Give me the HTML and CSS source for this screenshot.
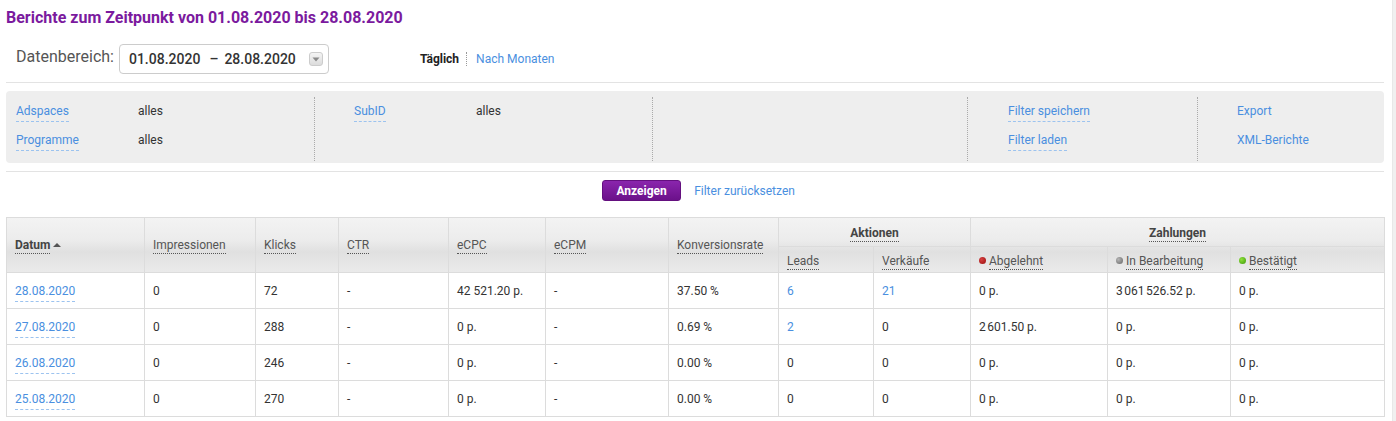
FILE: index.html
```html
<!DOCTYPE html>
<html lang="de">
<head>
<meta charset="utf-8">
<title>Berichte</title>
<link rel="stylesheet" href="styles.css">
</head>
<body>
<div class="page">
  <main class="main">
    <h1 class="title">Berichte zum Zeitpunkt von 01.08.2020 bis 28.08.2020</h1>

    <div class="range-row">
      <span class="range-label">Datenbereich:</span>
      <div class="range-box">
        <span class="range-date">01.08.2020</span>
        <span class="range-dash">–</span>
        <span class="range-date">28.08.2020</span>
        <span class="range-btn"><svg width="8" height="5" viewBox="0 0 8 5"><path d="M0.5 0.5 L7.5 0.5 L4 4.5 Z" fill="#8a8a8a"/></svg></span>
      </div>
      <div class="period">
        <span class="period-active">Täglich</span>
        <span class="period-sep"></span>
        <a class="period-link">Nach Monaten</a>
      </div>
    </div>

    <div class="hr"></div>

    <div class="filters">
      <div class="fcol fcol-first">
        <div class="frow"><span class="fkey"><a class="dlink">Adspaces</a></span><span class="fval">alles</span></div>
        <div class="frow"><span class="fkey"><a class="dlink">Programme</a></span><span class="fval">alles</span></div>
      </div>
      <div class="fcol">
        <div class="frow"><span class="fkey"><a class="dlink">SubID</a></span><span class="fval">alles</span></div>
      </div>
      <div class="fcol"></div>
      <div class="fcol fcol-save">
        <div class="frow"><a class="dlink">Filter speichern</a></div>
        <div class="frow"><a class="dlink">Filter laden</a></div>
      </div>
      <div class="fcol">
        <div class="frow"><a class="plink">Export</a></div>
        <div class="frow"><a class="plink">XML-Berichte</a></div>
      </div>
    </div>

    <div class="hr hr2"></div>

    <div class="actions">
      <button class="btn">Anzeigen</button>
      <a class="plink">Filter zurücksetzen</a>
    </div>

    <table class="report">
      <colgroup>
        <col class="c1"><col class="c2"><col class="c3"><col class="c4">
        <col class="c5"><col class="c6"><col class="c7"><col class="c8">
        <col class="c9"><col class="c10"><col class="c11"><col class="c12">
      </colgroup>
      <thead>
        <tr class="hrow1">
          <th rowspan="2"><span class="hl bold">Datum</span><span class="sort"></span></th>
          <th rowspan="2"><span class="hl">Impressionen</span></th>
          <th rowspan="2"><span class="hl">Klicks</span></th>
          <th rowspan="2"><span class="hl">CTR</span></th>
          <th rowspan="2"><span class="hl">eCPC</span></th>
          <th rowspan="2"><span class="hl">eCPM</span></th>
          <th rowspan="2"><span class="hl">Konversionsrate</span></th>
          <th colspan="2" class="group"><span class="hl bold">Aktionen</span></th>
          <th colspan="3" class="group"><span class="hl bold">Zahlungen</span></th>
        </tr>
        <tr class="hrow2">
          <th><span class="hl">Leads</span></th>
          <th><span class="hl">Verkäufe</span></th>
          <th><span class="dot dot-red"></span><span class="hl">Abgelehnt</span></th>
          <th><span class="dot dot-gray"></span><span class="hl">In Bearbeitung</span></th>
          <th><span class="dot dot-green"></span><span class="hl">Bestätigt</span></th>
        </tr>
      </thead>
      <tbody>
        <tr>
          <td><a class="dlink">28.08.2020</a></td><td>0</td><td>72</td><td>-</td><td>42&nbsp;521.20 p.</td><td>-</td><td>37.50 %</td>
          <td><a class="plink">6</a></td><td><a class="plink">21</a></td><td>0 p.</td><td>3&#8239;061&#8239;526.52 p.</td><td>0 p.</td>
        </tr>
        <tr>
          <td><a class="dlink">27.08.2020</a></td><td>0</td><td>288</td><td>-</td><td>0 p.</td><td>-</td><td>0.69 %</td>
          <td><a class="plink">2</a></td><td>0</td><td>2&#8239;601.50 p.</td><td>0 p.</td><td>0 p.</td>
        </tr>
        <tr>
          <td><a class="dlink">26.08.2020</a></td><td>0</td><td>246</td><td>-</td><td>0 p.</td><td>-</td><td>0.00 %</td>
          <td>0</td><td>0</td><td>0 p.</td><td>0 p.</td><td>0 p.</td>
        </tr>
        <tr>
          <td><a class="dlink">25.08.2020</a></td><td>0</td><td>270</td><td>-</td><td>0 p.</td><td>-</td><td>0.00 %</td>
          <td>0</td><td>0</td><td>0 p.</td><td>0 p.</td><td>0 p.</td>
        </tr>
      </tbody>
    </table>
  </main>
  <div class="scrolltrack"></div>
</div>
</body>
</html>
```

FILE: styles.css
```css
html, body {
  margin: 0;
  padding: 0;
  background: #fff;
  overflow: hidden;
}
body {
  font-family: Roboto, "Liberation Sans", Arial, sans-serif;
  font-size: 12px;
  color: #333;
}
.page {
  display: flex;
  height: 421px;
}
.main {
  width: 1378px;
  margin-left: 6px;
  flex: none;
}
.scrolltrack {
  margin-left: auto;
  width: 3px;
  background: #f0f0f0;
  border-left: 1px solid #e8e8e8;
}
a { cursor: pointer; }

.title {
  margin: 0;
  padding-top: 8px;
  font-size: 16px;
  line-height: 20px;
  font-weight: 700;
  color: #7b1a9e;
}

.range-row {
  display: flex;
  align-items: center;
  margin-top: 16px;
  height: 30px;
}
.range-label {
  margin-left: 10px;
  font-size: 16px;
  color: #555;
  margin-right: 5px;
  position: relative;
  top: -3px;
}
.range-box {
  display: flex;
  align-items: center;
  box-sizing: border-box;
  width: 210px;
  height: 30px;
  border: 1px solid #ccc;
  border-radius: 4px;
  padding-left: 9px;
  font-size: 14px;
  font-weight: 500;
  color: #333;
  background: #fff;
}
.range-dash {
  margin: 0 6px 0 9px;
}
.range-btn {
  display: flex;
  align-items: center;
  justify-content: center;
  width: 14px;
  height: 14px;
  margin-left: 13px;
  border: 1px solid #ccc;
  border-radius: 3px;
  background: linear-gradient(#f4f4f4, #dcdcdc);
  box-sizing: border-box;
}
.period {
  display: flex;
  align-items: center;
  margin-left: 91px;
  font-size: 12px;
}
.period-active {
  font-weight: 700;
  color: #222;
}
.period-sep {
  display: inline-block;
  height: 14px;
  border-left: 1px dotted #999;
  margin: 0 9px 0 7px;
}
.period-link {
  color: #4a8fe0;
}

.hr {
  height: 0;
  border-top: 1px solid #e3e3e3;
  margin-top: 8px;
}
.hr2 {
  margin-top: 8px;
}

.filters {
  display: grid;
  grid-template-columns: 308px 338px 315px 230px 1fr;
  background: #eeeeee;
  border-radius: 4px;
  margin-top: 8px;
  padding: 6px 0 9px;
  height: 57px;
}
.fcol {
  border-left: 1px dotted #aaa;
  padding-left: 39px;
  padding-top: 6px;
}
.fcol-first {
  border-left: none;
  padding-left: 10px;
}
.fcol-save {
  padding-left: 40px;
}
.frow {
  display: flex;
  align-items: flex-start;
  height: 19px;
  margin-bottom: 10px;
  line-height: 16px;
}
.fkey {
  width: 122px;
  flex: none;
}
.fval {
  color: #333;
}

.dlink {
  color: #4a8fe0;
  display: inline-block;
  border-bottom: 1px dashed #9cc3ef;
  padding-bottom: 2px;
  line-height: 16px;
}
.plink {
  color: #4a8fe0;
}

.actions {
  display: flex;
  justify-content: center;
  align-items: center;
  gap: 13px;
  margin-top: 8px;
  padding-left: 7px;
}
.btn {
  font-family: Roboto, "Liberation Sans", Arial, sans-serif;
  font-size: 12px;
  font-weight: 700;
  color: #fff;
  width: 79px;
  height: 21px;
  border: 1px solid #64107f;
  border-radius: 3px;
  background: linear-gradient(#8a25ad, #6b118a);
  padding: 0;
}

.report {
  margin-top: 16px;
  width: 1378px;
  border-collapse: collapse;
  table-layout: fixed;
  border: 1px solid #dcdcdc;
}
.c1 { width: 138px; }
.c2 { width: 111px; }
.c3 { width: 83px; }
.c4 { width: 110px; }
.c5 { width: 97px; }
.c6 { width: 123px; }
.c7 { width: 110px; }
.c8 { width: 95px; }
.c9 { width: 97px; }
.c10 { width: 137px; }
.c11 { width: 123px; }
.c12 { width: 154px; }
.report th, .report td {
  border: 1px solid #dcdcdc;
  text-align: left;
  padding: 0 0 0 8px;
  white-space: nowrap;
  overflow: hidden;
}
.report thead {
  background: linear-gradient(#f3f3f3 0%, #ececec 40%, #e0e0e0 62%, #ebebeb 100%);
}
.report th {
  font-weight: 400;
  color: #555;
  font-size: 12px;
}
.hrow1 { height: 29px; }
.hrow2 { height: 26px; }
.hrow2 th { vertical-align: middle; padding-top: 2px; }
.report th.group {
  text-align: center;
  padding-left: 0;
  padding-top: 1px;
}
.hl {
  border-bottom: 1px dotted #555;
  padding-bottom: 1px;
}
.hl.bold {
  font-weight: 700;
  color: #444;
}
.sort {
  display: inline-block;
  width: 0;
  height: 0;
  border-left: 4px solid transparent;
  border-right: 4px solid transparent;
  border-bottom: 4px solid #555;
  margin-left: 3px;
  vertical-align: 2px;
}
.dot {
  display: inline-block;
  width: 7px;
  height: 7px;
  border-radius: 50%;
  margin-right: 3px;
  vertical-align: 1px;
}
.dot-red { background: radial-gradient(circle at 35% 35%, #d64040, #9a0f0f); }
.dot-gray { background: radial-gradient(circle at 35% 35%, #b5b5b5, #666); }
.dot-green { background: radial-gradient(circle at 35% 35%, #8ee03a, #3e9a0a); }

.report tbody tr { height: 36px; }
.report td {
  color: #333;
  font-size: 12px;
}
.report td .dlink {
  padding-top: 3px;
}
```
